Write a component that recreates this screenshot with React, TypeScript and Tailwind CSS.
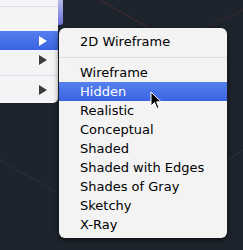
import React from "react";

const items = [
  "Wireframe",
  "Hidden",
  "Realistic",
  "Conceptual",
  "Shaded",
  "Shaded with Edges",
  "Shades of Gray",
  "Sketchy",
  "X-Ray",
];

const Arrow = ({ color }: { color: string }) => (
  <svg width="8" height="10" viewBox="0 0 8 10">
    <path d="M0 0 L8 5 L0 10 Z" fill={color} />
  </svg>
);

export default function App() {
  return (
    <div
      className="relative w-[243px] h-[250px] overflow-hidden bg-[#1e242d]"
      style={{ fontFamily: '"DejaVu Sans", "Liberation Sans", sans-serif' }}
    >
      {/* faint viewport lines */}
      <svg className="absolute inset-0" width="243" height="250">
        <line x1="100" y1="0" x2="170" y2="40" stroke="#4a2a30" strokeWidth="1" />
        <line x1="243" y1="10" x2="200" y2="30" stroke="#3a2a30" strokeWidth="1" />
        <line x1="0" y1="160" x2="70" y2="200" stroke="#2c333d" strokeWidth="1" />
        <line x1="243" y1="150" x2="228" y2="160" stroke="#2c333d" strokeWidth="1" />
      </svg>

      <div className="relative flex">
        {/* parent menu */}
        <div className="w-[58px] h-[103px] bg-[#f4f4f6] rounded-br-[5px] flex flex-col">
          <div className="h-[6px]" />
          <div className="h-px bg-[#dcdce2]" />
          <div className="h-[5px]" />
          <div className="h-[19px]" />
          <div className="h-[19px] bg-gradient-to-b from-[#5680ee] to-[#3a63e2] flex items-center justify-end pr-[11px]">
            <Arrow color="#ffffff" />
          </div>
          <div className="h-[19px] flex items-center justify-end pr-[11px]">
            <Arrow color="#3c3c3c" />
          </div>
          <div className="h-[6px]" />
          <div className="h-px bg-[#dcdce2]" />
          <div className="h-[4px]" />
          <div className="h-[19px] flex items-center justify-end pr-[11px]">
            <Arrow color="#3c3c3c" />
          </div>
        </div>
        <div className="w-[5px] h-[25px] bg-gradient-to-b from-[#b9b9ea] to-[#6c70d4] rounded-br-[3px]" />
      </div>

      {/* submenu */}
      <div className="absolute left-[59px] top-[28px] w-[168px] bg-[#f3f3f3] rounded-[6px] py-[4px] shadow-[0_2px_6px_rgba(0,0,0,0.55)] text-[13px] text-black">
        <div className="h-[19px] flex items-center pl-[21px]">2D Wireframe</div>
        <div className="h-[12px] flex items-center">
          <div className="h-px w-full bg-[#dedede]" />
        </div>
        {items.map((label) =>
          label === "Hidden" ? (
            <div
              key={label}
              className="h-[19px] flex items-center pl-[21px] text-white bg-gradient-to-b from-[#5680ee] to-[#3a63e2]"
            >
              {label}
            </div>
          ) : (
            <div key={label} className="h-[19px] flex items-center pl-[21px]">
              {label}
            </div>
          )
        )}
      </div>

      {/* mouse cursor */}
      <svg className="absolute left-[150px] top-[91px]" width="12" height="19" viewBox="0 0 12 19">
        <path
          d="M1 1 L1 15 L4.5 11.5 L7 17.5 L9 16.6 L6.6 10.8 L11 10.8 Z"
          fill="#000"
          stroke="#fff"
          strokeWidth="1"
          strokeLinejoin="round"
        />
      </svg>
    </div>
  );
}
